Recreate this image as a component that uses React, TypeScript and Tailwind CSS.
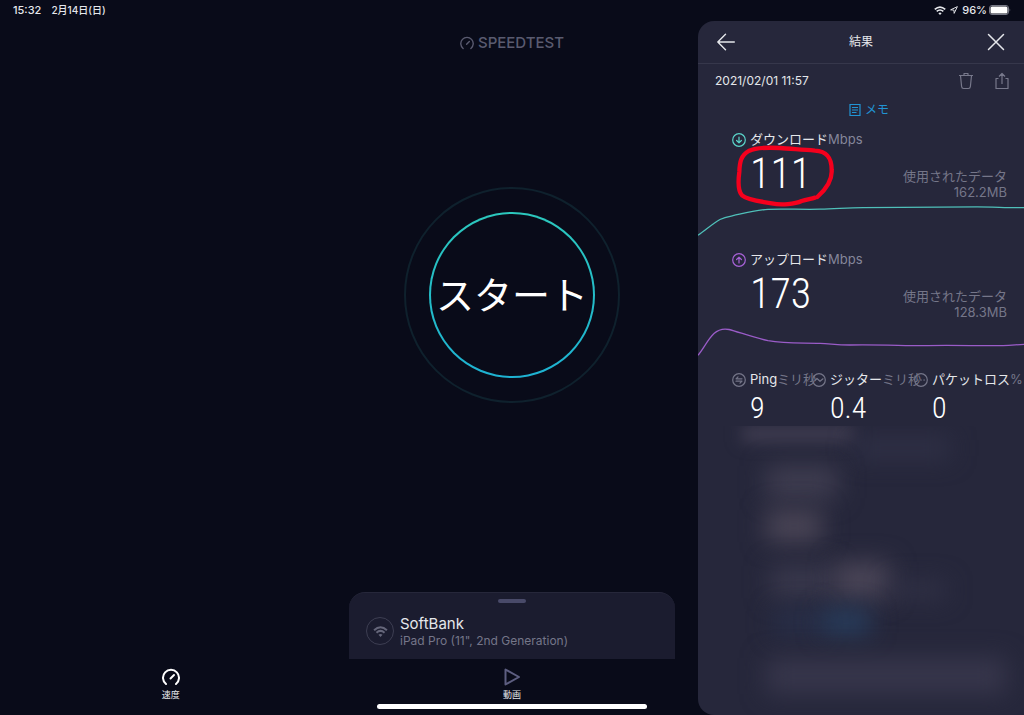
import type { ReactNode } from "react";

const JP = "font-['Inter','Noto_Sans_CJK_JP',sans-serif]";
const DIGITS = "font-['Roboto_Condensed','Liberation_Sans_Narrow','Roboto',sans-serif] font-light";

function GaugeIcon({ className, stroke }: { className: string; stroke: number }) {
    return (
        <svg viewBox="0 0 18 18" className={className} fill="none" stroke="currentColor" strokeWidth={stroke} strokeLinecap="round">
            <path d="M4 16 A8 8 0 1 1 14 16" />
            <path d="M8.5 10.5 L12 7" />
        </svg>
    );
}

function WifiIcon({ className }: { className: string }) {
    return (
        <svg viewBox="0 0 16 12" className={className} fill="none" stroke="currentColor" strokeWidth="2.2">
            <path d="M1 4.6 Q8 -1.8 15 4.6" />
            <path d="M3.6 7.3 Q8 3.4 12.4 7.3" />
            <path d="M8 12 L5.8 9.6 Q8 7.9 10.2 9.6 Z" fill="currentColor" stroke="none" />
        </svg>
    );
}

function RoundIcon({ className, children }: { className: string; children: ReactNode }) {
    return (
        <svg viewBox="0 0 14 14" className={`size-3.5 shrink-0 ${className}`} fill="none" stroke="currentColor" strokeWidth="1.2" strokeLinecap="round" strokeLinejoin="round">
            <circle cx="7" cy="7" r="6.3" />
            {children}
        </svg>
    );
}

function StatusBar() {
    return (
        <div className="flex h-5 items-center justify-between px-[13px] text-[11px] font-medium text-gray-200">
            <div className="flex items-center gap-2.5">
                <span>15:32</span>
                <span className="text-[10px]">2月14日(日)</span>
            </div>
            <div className="flex items-center gap-0.5">
                <WifiIcon className="mr-0.5 h-[9px] w-3" />
                <svg viewBox="0 0 10 10" className="mr-0.5 size-2" fill="none" stroke="currentColor" strokeWidth="1.2" strokeLinejoin="round">
                    <path d="M9.2 0.8 L0.8 4.8 L4.9 5.1 L5.2 9.2 Z" />
                </svg>
                <span>96%</span>
                <svg viewBox="0 0 22 10" className="h-2.5 w-[22px]">
                    <rect x="0.5" y="0.5" width="19" height="9" rx="2.5" fill="none" stroke="#777986" />
                    <rect x="1.5" y="1.5" width="17" height="7" rx="1.5" fill="#fff" />
                    <path d="M20.6 3.3 Q22 5 20.6 6.7 Z" fill="#777986" />
                </svg>
            </div>
        </div>
    );
}

type SpeedProps = {
    label: string;
    value: string;
    data: string;
    icon: ReactNode;
    line: string;
    color: string;
    marked?: boolean;
};

function Speed({ label, value, data, icon, line, color, marked }: SpeedProps) {
    return (
        <section className="pb-2.5">
            <div className="flex h-5 items-center pl-[34px]">
                {icon}
                <h2 className="ml-1 text-[13px] text-gray-200">{label}</h2>
                <span className="text-[13px] text-[#85869a]">Mbps</span>
            </div>
            <div className="flex h-[50px] justify-between pl-[52px] pr-[17px]">
                <div className="relative">
                    <p className={`text-[42px] leading-12 text-white ${DIGITS}`}>{value}</p>
                    {marked && (
                        <svg viewBox="138 75 294 186" className="absolute -left-3.5 -top-[5px] h-[62px] w-[98px]" fill="none" stroke="#f5001d" strokeWidth="13" strokeLinecap="round" strokeLinejoin="round">
                            <path d="M382 231 C408 208 427 180 425 150 C425 112 410 94 375 92 C330 88 300 87 270 84 C230 82 195 84 178 92 C152 106 149 128 148 155 C144 185 143 212 156 226 C175 242 215 244 245 250 C275 256 315 252 335 243 C350 238 362 237 375 233" />
                        </svg>
                    )}
                </div>
                <p className="flex flex-col justify-end text-right text-[13px] leading-4 text-[#757689]">
                    <span>使用されたデータ</span>
                    <span>{data}</span>
                </p>
            </div>
            <svg viewBox="0 0 326 40" preserveAspectRatio="none" className="block h-10 w-full">
                <path d={line} fill="none" stroke={color} strokeWidth="1.3" />
            </svg>
        </section>
    );
}

function Stat({ label, unit, value, icon }: { label: string; unit: string; value: string; icon: ReactNode }) {
    return (
        <div>
            <div className="flex h-5 items-center whitespace-nowrap text-[13px]">
                {icon}
                <span className="ml-1 text-gray-200">{label}</span>
                <span className="text-[#757689]">{unit}</span>
            </div>
            <p className={`pl-[18px] text-[30px] leading-9 text-white ${DIGITS}`}>{value}</p>
        </div>
    );
}

function ResultPanel() {
    return (
        <aside className="absolute bottom-0 right-0 top-[21px] flex w-[326px] flex-col overflow-hidden rounded-l-2xl bg-[#26273b]">
            <header className="flex h-[43px] shrink-0 items-center justify-between border-b border-[#36374b] px-[19px] text-gray-200">
                <button aria-label="戻る">
                    <svg viewBox="0 0 18 18" className="size-[18px]" fill="none" stroke="currentColor" strokeWidth="1.4" strokeLinecap="round" strokeLinejoin="round">
                        <path d="M17.3 9 H0.8 M8.5 1.3 L0.8 9 L8.5 16.7" />
                    </svg>
                </button>
                <h1 className="text-[12px]">結果</h1>
                <button aria-label="閉じる">
                    <svg viewBox="0 0 18 18" className="size-[18px]" fill="none" stroke="currentColor" strokeWidth="1.5" strokeLinecap="round">
                        <path d="M1.5 1.5 L16.5 16.5 M16.5 1.5 L1.5 16.5" />
                    </svg>
                </button>
            </header>
            <div className="flex h-[34px] shrink-0 items-center justify-between pl-[17px] pr-3.5">
                <time className="text-[12px] text-gray-200">2021/02/01 11:57</time>
                <div className="flex gap-5 text-[#77788b]">
                    <button aria-label="削除">
                        <svg viewBox="0 0 16 18" className="h-[18px] w-4" fill="none" stroke="currentColor" strokeWidth="1.2" strokeLinejoin="round">
                            <path d="M1 3.5 H15 M6 3.2 V1.5 H10 V3.2 M2.5 3.5 L3.6 14.5 Q3.8 16.5 5.6 16.5 H10.4 Q12.2 16.5 12.4 14.5 L13.5 3.5" />
                        </svg>
                    </button>
                    <button aria-label="共有">
                        <svg viewBox="0 0 16 18" className="h-[18px] w-4" fill="none" stroke="currentColor" strokeWidth="1.2" strokeLinejoin="round">
                            <path d="M4.5 6.5 H2 V16.5 H14 V6.5 H11.5 M8 12 V1.5 M5 4.5 L8 1.5 L11 4.5" />
                        </svg>
                    </button>
                </div>
            </div>
            <button className="flex h-6 shrink-0 items-center justify-center gap-1 pl-4 text-[12px] text-[#2194d4]">
                <svg viewBox="0 0 12 14" className="h-3.5 w-3" fill="none" stroke="currentColor" strokeWidth="1.2">
                    <path d="M1 1.5 H11 V12.5 H1 Z M3 4.5 H9 M3 7 H9 M3 9.5 H7.5" />
                </svg>
                メモ
            </button>
            <div className="pt-2">
                <Speed
                    label="ダウンロード"
                    value="111"
                    data="162.2MB"
                    color="#4fc0b9"
                    marked
                    line="M0 35.3 C8 30 14 24 22 19.5 C27 17 31 16.5 35 15.7 C46 13.3 56 10.5 70 9.3 C85 8.6 105 9.7 122 9.2 C140 8.7 150 7.8 165 7.7 C210 7.7 250 6.9 279 6.9 C295 6.9 310 7.8 326 7.7"
                    icon={<RoundIcon className="text-[#5bd6cb]"><path d="M7 4 V9.8 M4.6 7.5 L7 9.9 L9.4 7.5" /></RoundIcon>}
                />
                <Speed
                    label="アップロード"
                    value="173"
                    data="128.3MB"
                    color="#9a5cc8"
                    line="M0 35.3 C6 28 10 19 16 13.5 C21 9 25 8.3 31 9.5 C40 11.8 54 17 70 20.7 C88 24 105 22.7 122 23.4 C133 23.8 138 25 152 25 C180 24.6 200 25.5 225 25.7 C250 25 280 25.9 305 25.7 C314 25.4 319 24.6 326 24.3"
                    icon={<RoundIcon className="text-[#a862d8]"><path d="M7 10 V4.2 M4.6 6.5 L7 4.1 L9.4 6.5" /></RoundIcon>}
                />
            </div>
            <div className="grid grid-cols-[80px_102px_1fr] pl-[34px]">
                <Stat label="Ping" unit="ミリ秒" value="9" icon={<RoundIcon className="text-[#757689]"><path d="M10 5.8 H4 L6 3.8 M4 8.2 H10 L8 10.2" /></RoundIcon>} />
                <Stat label="ジッター" unit="ミリ秒" value="0.4" icon={<RoundIcon className="text-[#757689]"><path d="M3 7.5 L5 5.5 L8 8.3 L11 5.8" /></RoundIcon>} />
                <Stat label="パケットロス" unit="%" value="0" icon={<RoundIcon className="text-[#757689]"><path d="M3.5 7 H4.2 M6.6 7 H7.4 M9.8 7 H10.5" /></RoundIcon>} />
            </div>
            {/* hidden details */}
            <div className="flex-1 overflow-hidden pl-11">
                <div className="flex">
                    <div className="h-4 w-28 bg-[#403d51] blur-sm" />
                    <div className="mt-3 h-5 w-24 bg-[#303147] blur-md" />
                </div>
                <div className="ml-6 mt-2 h-8 w-18 bg-[#3f3d50] blur-md" />
                <div className="ml-6 mt-3 h-8 w-14 bg-[#4a4556] blur-md" />
                <div className="mt-5 flex items-end pl-7">
                    <div className="h-8 w-16 bg-[#39384c] blur-md" />
                    <div className="h-9 w-14 bg-[#4a4557] blur-md" />
                    <div className="h-4 w-14 bg-[#323247] blur-md" />
                </div>
                <div className="mt-3 flex pl-8">
                    <div className="h-6 w-12 bg-[#282f49] blur-md" />
                    <div className="h-6 w-12 bg-[#283f60] blur-md" />
                </div>
                <div className="ml-6 mt-6 h-9 w-60 bg-[#37364b] blur-md" />
            </div>
        </aside>
    );
}

export default function App() {
    return (
        <div className={`relative flex min-h-screen flex-col overflow-hidden bg-[#090b19] ${JP}`}>
            <StatusBar />
            <header className="flex h-11 items-center justify-center gap-1 pt-0.5 text-[#5a5b70]">
                <GaugeIcon className="size-3.5" stroke={1.8} />
                <span className="text-[15px] font-medium">SPEEDTEST</span>
            </header>
            <main className="flex flex-1 items-center justify-center pb-[66px]">
                <button className="flex size-[216px] items-center justify-center rounded-full border-2 border-[#0f212d]">
                    <span className="flex size-[166px] rounded-full bg-linear-to-b from-[#2cc8bd] to-[#1eb2d2] p-0.5">
                        <span className="flex flex-1 items-center justify-center whitespace-nowrap rounded-full bg-[#090b19] text-[38px] text-white">スタート</span>
                    </span>
                </button>
            </main>
            <section className="mx-auto flex h-[67px] w-[326px] flex-col rounded-t-2xl border-t border-[#26273a] bg-[#1b1c2f]">
                <div className="mx-auto mt-1.5 h-1 w-7 rounded-full bg-[#494a69]" />
                <div className="flex items-center gap-1.5 pl-[17px] pt-2.5">
                    <div className="flex size-7 items-center justify-center rounded-full border border-[#3d3e52] text-[#65667a]">
                        <WifiIcon className="h-[11px] w-[15px]" />
                    </div>
                    <div className="pt-0.5">
                        <p className="text-[15px] leading-[18px] text-gray-200">SoftBank</p>
                        <p className="text-[12px] leading-4 text-[#757689]">iPad Pro (11", 2nd Generation)</p>
                    </div>
                </div>
            </section>
            <nav className="grid h-[45px] grid-cols-3 text-[9px] text-gray-200">
                <button className="flex flex-col items-center pt-[9px]">
                    <GaugeIcon className="size-[18px] text-white" stroke={2} />
                    <span className="leading-[18px]">速度</span>
                </button>
                <button className="flex flex-col items-center pt-[9px]">
                    <svg viewBox="0 0 18 18" className="size-[18px] text-[#5d5e80]" fill="none" stroke="currentColor" strokeWidth="2" strokeLinejoin="round">
                        <path d="M2.5 1.5 V16.5 L16 9 Z" />
                    </svg>
                    <span className="leading-[18px]">動画</span>
                </button>
            </nav>
            <div className="mx-auto mb-1.5 h-[5px] w-[270px] rounded-full bg-white" />
            <ResultPanel />
        </div>
    );
}
